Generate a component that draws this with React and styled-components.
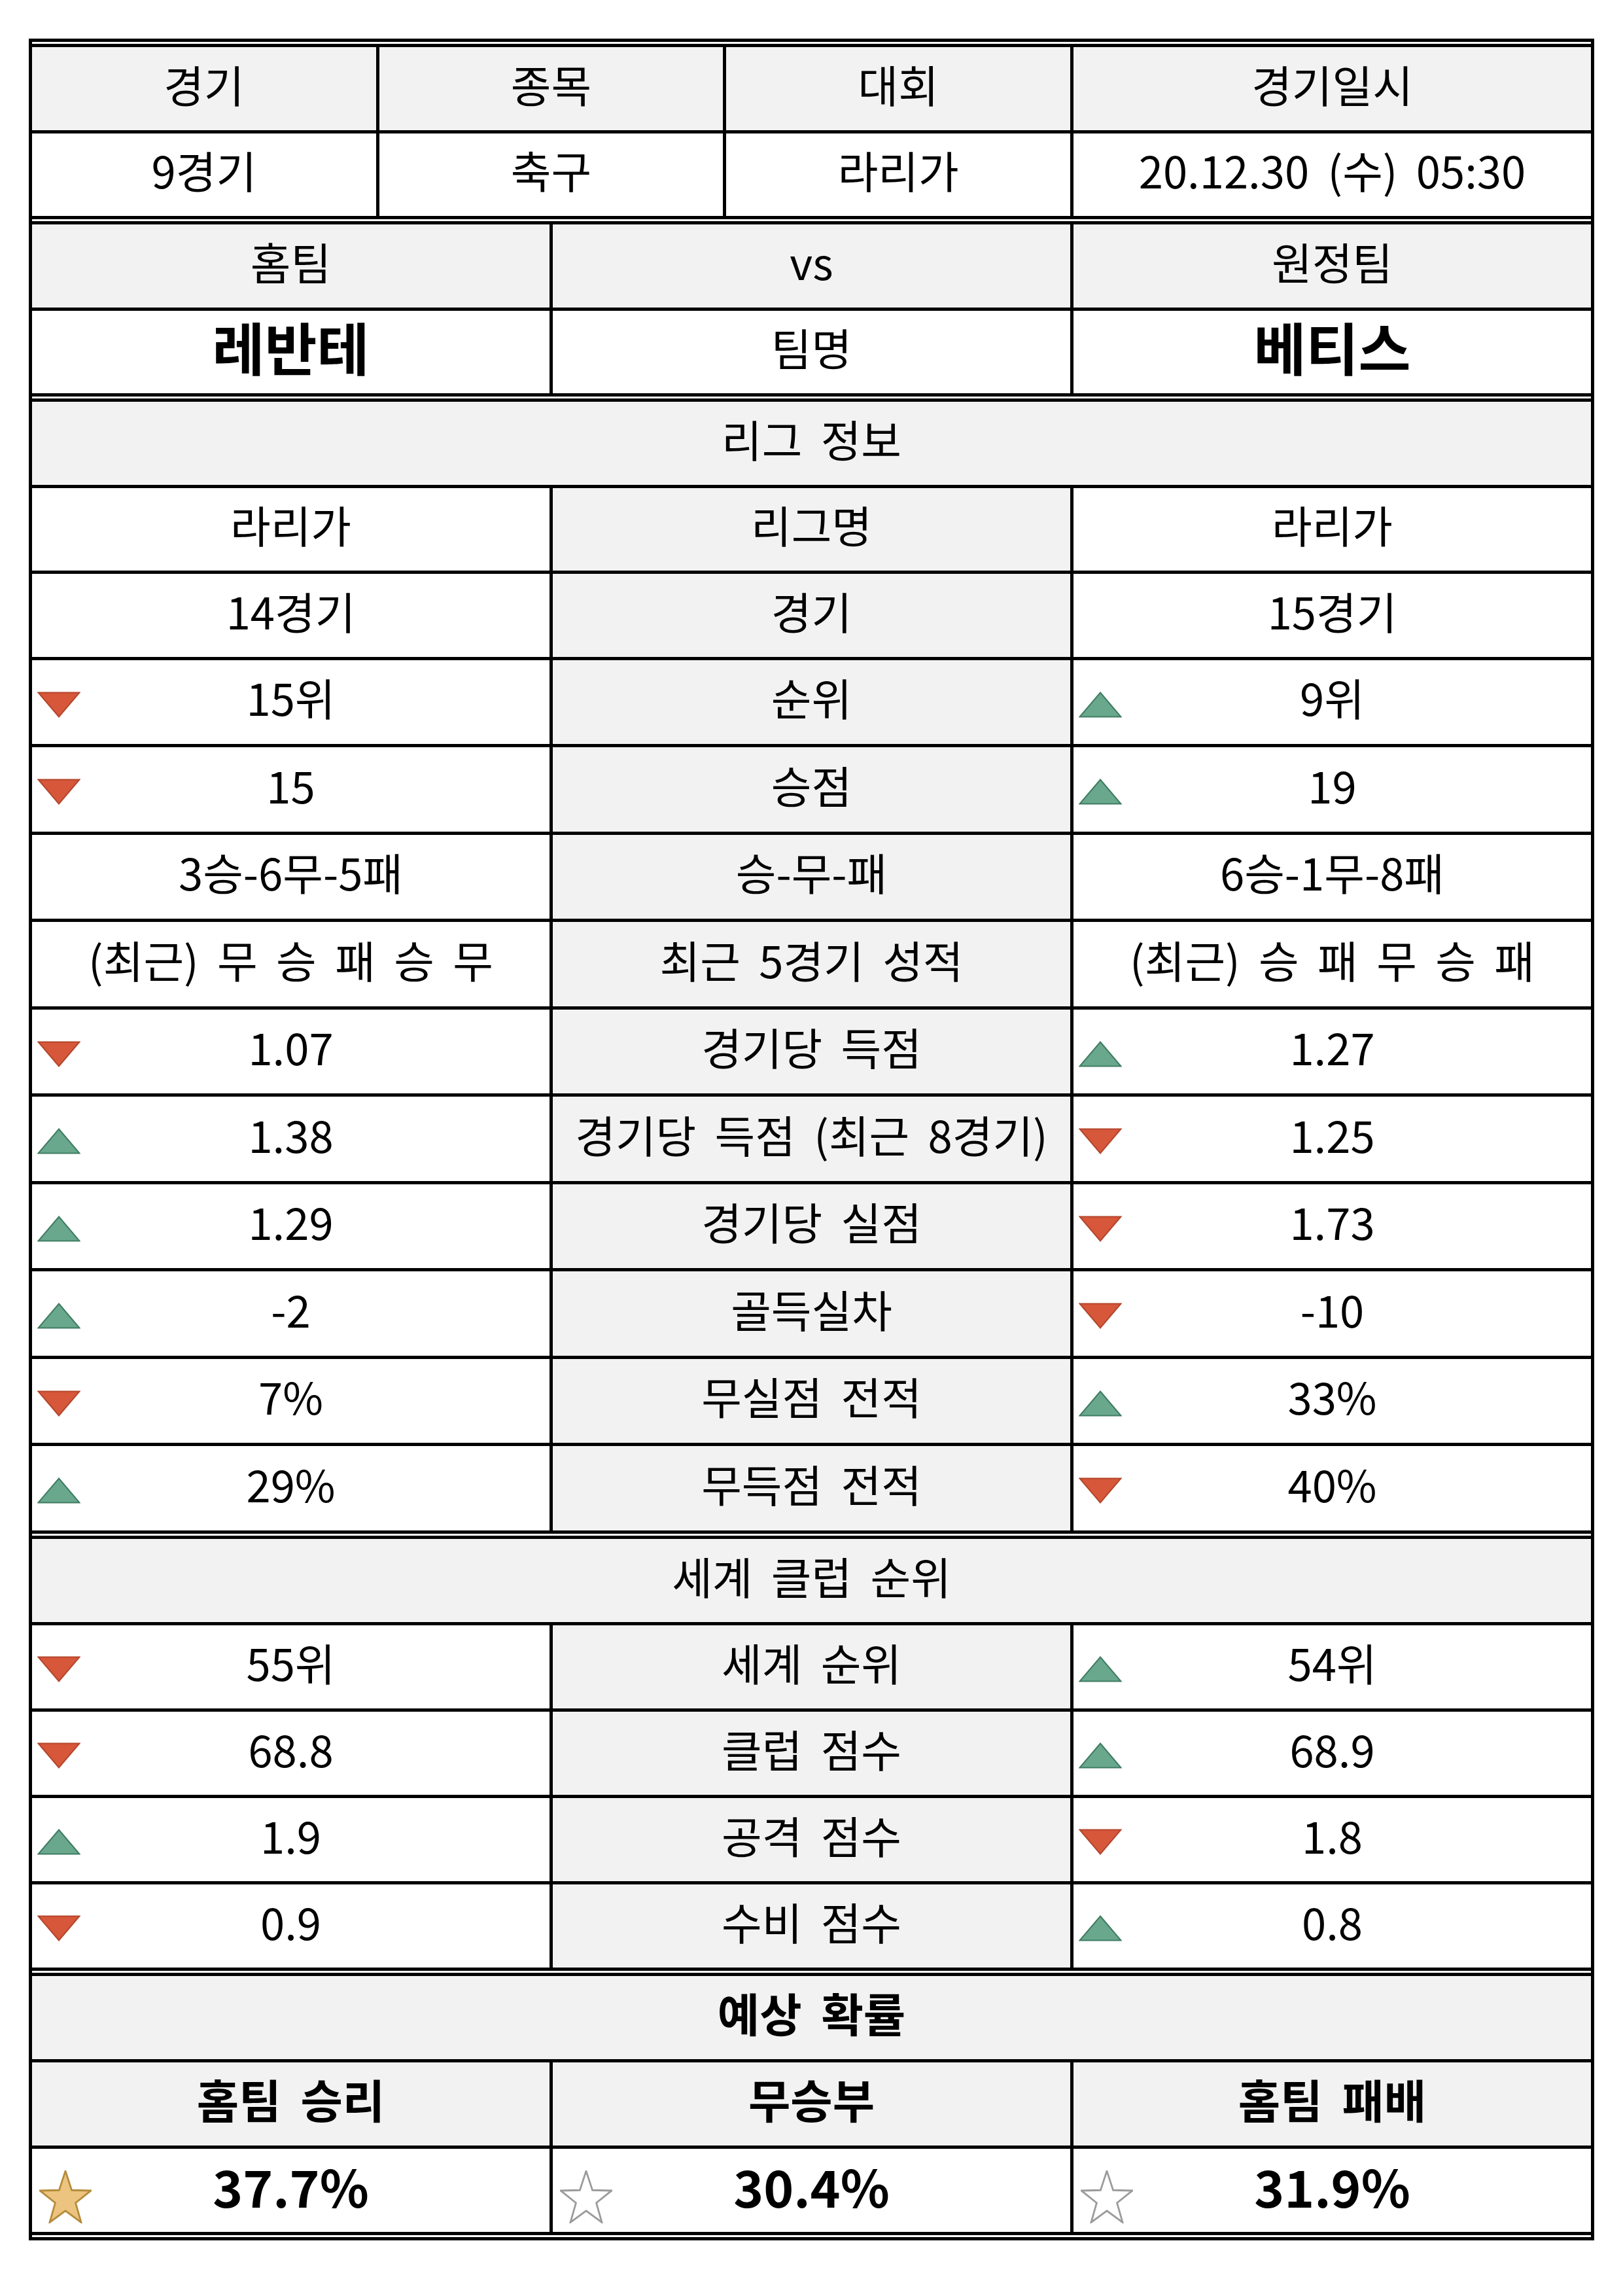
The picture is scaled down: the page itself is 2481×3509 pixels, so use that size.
import React from 'react';
import styled, { createGlobalStyle } from 'styled-components';

const GlobalStyle = createGlobalStyle`
  html, body {
    margin: 0;
    padding: 0;
    background: #ffffff;
  }
`;

const Page = styled.div`
  padding: 59px 0 80px 44px;
`;

const Table = styled.div`
  width: 2393px;
  box-sizing: border-box;
  border-left: 5px solid #000;
  border-right: 5px solid #000;
  display: flex;
  flex-direction: column;
  font-family: "Noto Sans CJK KR", "Noto Sans", sans-serif;
  color: #000;
`;

const Rule = styled.div`
  height: ${(p) => (p.$double ? 13 : 5)}px;
  background: ${(p) =>
    p.$double
      ? 'linear-gradient(#000 0 5px, #fff 5px 8px, #000 8px 13px)'
      : '#000'};
`;

// row heights differ a little between blocks, as in the sheet
const Row = styled.div`
  display: grid;
  grid-template-columns: ${(p) =>
    p.$four ? 'repeat(3, 1fr) 791px' : 'repeat(3, 1fr)'};
  column-gap: 5px;
  height: ${(p) => p.$h || 127.1}px;
  background: #000;
`;

const Cell = styled.div`
  grid-column: ${(p) => (p.$span ? '1 / -1' : 'auto')};
  background: ${(p) => (p.$shade ? '#f2f2f2' : '#ffffff')};
  display: grid;
  grid-template-columns: 1fr auto 1fr;
  align-items: center;
  min-width: 0;
`;

const Text = styled.span`
  grid-column: 2;
  grid-row: 1;
  white-space: nowrap;
  line-height: 1;
  padding-bottom: 16px;
  font-size: ${(p) => p.$size || 67}px;
  font-weight: ${(p) => (p.$bold ? 700 : 400)};
  word-spacing: 0.2em;
`;

const Marker = styled.svg`
  grid-column: 1;
  grid-row: 1;
  justify-self: start;
  margin-left: ${(p) => p.$left}px;
  margin-top: ${(p) => p.$drop}px;
`;

const Triangle = ({ up }) => (
  <Marker $left={8} $drop={8} width="66" height="40" viewBox="0 0 66 40">
    {up ? (
      <polygon
        points="33,1.5 64.5,38.5 1.5,38.5"
        fill="#69a88c"
        stroke="#3f7c63"
        strokeWidth="2"
        strokeLinejoin="miter"
      />
    ) : (
      <polygon
        points="1.5,1.5 64.5,1.5 33,38.5"
        fill="#d6573a"
        stroke="#b4462c"
        strokeWidth="2"
        strokeLinejoin="miter"
      />
    )}
  </Marker>
);

const Star = ({ filled }) => (
  <Marker $left={11} $drop={20} width="80" height="81" viewBox="6 4 88 84" preserveAspectRatio="none">
    <polygon
      points="50,5 60.58,35.44 92.8,36.09 67.12,55.56 76.45,86.41 50,68 23.55,86.41 32.88,55.56 7.2,36.09 39.42,35.44"
      fill={filled ? '#ecc47f' : '#ffffff'}
      stroke={filled ? '#b58c3c' : '#9b9b9b'}
      strokeWidth="3"
    />
  </Marker>
);

const Value = ({ children, mark, shade, bold, size, star }) => (
  <Cell $shade={shade}>
    {mark === 'up' && <Triangle up />}
    {mark === 'down' && <Triangle />}
    {star === 'gold' && <Star filled />}
    {star === 'empty' && <Star />}
    <Text $bold={bold} $size={size}>{children}</Text>
  </Cell>
);

const Section = ({ children, bold, h }) => (
  <Row $h={h}>
    <Cell $span $shade>
      <Text $bold={bold} $size={bold ? 70 : undefined}>{children}</Text>
    </Cell>
  </Row>
);

const TOP = 126.5;
const STATS = 128.5;

const statRows = [
  ['15위', 'down', '순위', '9위', 'up'],
  ['15', 'down', '승점', '19', 'up'],
  ['3승-6무-5패', null, '승-무-패', '6승-1무-8패', null],
  ['(최근) 무 승 패 승 무', null, '최근 5경기 성적', '(최근) 승 패 무 승 패', null],
  ['1.07', 'down', '경기당 득점', '1.27', 'up'],
  ['1.38', 'up', '경기당 득점 (최근 8경기)', '1.25', 'down'],
  ['1.29', 'up', '경기당 실점', '1.73', 'down'],
  ['-2', 'up', '골득실차', '-10', 'down'],
  ['7%', 'down', '무실점 전적', '33%', 'up'],
  ['29%', 'up', '무득점 전적', '40%', 'down'],
];

const worldRows = [
  ['55위', 'down', '세계 순위', '54위', 'up'],
  ['68.8', 'down', '클럽 점수', '68.9', 'up'],
  ['1.9', 'up', '공격 점수', '1.8', 'down'],
  ['0.9', 'down', '수비 점수', '0.8', 'up'],
];

const CompareRow = ({ row, h }) => {
  const [home, homeMark, label, away, awayMark] = row;
  return (
    <Row $h={h}>
      <Value mark={homeMark}>{home}</Value>
      <Value shade>{label}</Value>
      <Value mark={awayMark}>{away}</Value>
    </Row>
  );
};

const withRules = (rows, h) =>
  rows.map((row, i) => (
    <React.Fragment key={row[2]}>
      {i > 0 && <Rule />}
      <CompareRow row={row} h={h} />
    </React.Fragment>
  ));

export default function App() {
  return (
    <Page>
      <GlobalStyle />
      <Table>
        <Rule $double />
        <Row $four $h={TOP}>
          <Value shade>경기</Value>
          <Value shade>종목</Value>
          <Value shade>대회</Value>
          <Value shade>경기일시</Value>
        </Row>
        <Rule />
        <Row $four $h={TOP}>
          <Value>9경기</Value>
          <Value>축구</Value>
          <Value>라리가</Value>
          <Value>20.12.30 (수) 05:30</Value>
        </Row>
        <Rule $double />
        <Row $h={TOP}>
          <Value shade>홈팀</Value>
          <Value shade>vs</Value>
          <Value shade>원정팀</Value>
        </Row>
        <Rule />
        <Row $h={TOP}>
          <Value bold size={87}>레반테</Value>
          <Value>팀명</Value>
          <Value bold size={87}>베티스</Value>
        </Row>
        <Rule $double />
        <Section h={TOP}>리그 정보</Section>
        <Rule />
        <CompareRow h={TOP} row={['라리가', null, '리그명', '라리가', null]} />
        <Rule />
        <CompareRow h={TOP} row={['14경기', null, '경기', '15경기', null]} />
        <Rule />
        {withRules(statRows, STATS)}
        <Rule $double />
        <Section>세계 클럽 순위</Section>
        <Rule />
        {withRules(worldRows)}
        <Rule $double />
        <Section bold>예상 확률</Section>
        <Rule />
        <Row>
          <Value shade bold size={70}>홈팀 승리</Value>
          <Value shade bold size={70}>무승부</Value>
          <Value shade bold size={70}>홈팀 패배</Value>
        </Row>
        <Rule />
        <Row>
          <Value bold size={78} star="gold">37.7%</Value>
          <Value bold size={78} star="empty">30.4%</Value>
          <Value bold size={78} star="empty">31.9%</Value>
        </Row>
        <Rule $double />
      </Table>
    </Page>
  );
}
